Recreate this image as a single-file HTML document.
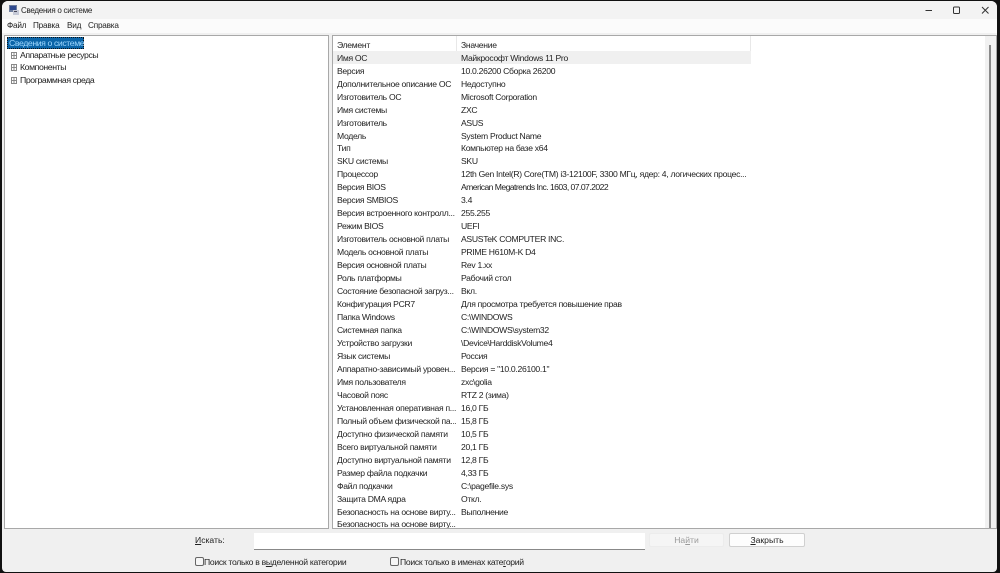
<!DOCTYPE html>
<html><head><meta charset="utf-8"><style>
html,body{margin:0;padding:0;background:#111}
body{width:1000px;height:573px;overflow:hidden;position:relative;font-family:"Liberation Sans","DejaVu Sans",sans-serif;font-size:8.6px;color:#222}
div{position:absolute;box-sizing:border-box}
#win{left:2px;top:1px;width:995px;height:571px;background:#f0f0f0;border-radius:6px 6px 4px 4px;overflow:hidden}
.abs{position:absolute;white-space:nowrap;line-height:12px}
.r{position:absolute;left:0;width:417px;height:13px;line-height:13px;white-space:nowrap;letter-spacing:-.3px}
.r span{position:absolute;top:0}
.r span:first-child{left:4px;width:119px;overflow:hidden}
.r span:last-child{left:128px}
.cb{position:absolute;width:9px;height:9px;box-sizing:border-box;border:1px solid #666;border-radius:2px;background:#f6f6f6}
.m{font-size:8.2px;letter-spacing:-.2px}
.t{font-size:8.7px;letter-spacing:-.4px}
.f{letter-spacing:-.3px}
u{text-decoration-thickness:1px}
</style></head><body>
<div id="win">
<div style="left:0;top:0;width:995px;height:18px;background:#f3f3f3"></div>
<div style="left:0;top:18px;width:995px;height:14px;background:#fbfbfb"></div>
<svg style="position:absolute;left:6px;top:3px" width="12" height="12" viewBox="0 0 12 12"><rect x="1" y="1" width="8" height="7" fill="#6f7f9f"/><rect x="2" y="2" width="6" height="4" fill="#2f4a8f"/><rect x="5" y="6" width="6" height="5" fill="#c5c9d6"/><rect x="6" y="7" width="3" height="1" fill="#445"/></svg>
<span class="abs" style="left:19px;top:4px;font-size:8px;letter-spacing:-.27px">Сведения о системе</span>
<svg style="position:absolute;left:920px;top:0" width="70" height="18" viewBox="0 0 70 18" fill="none" stroke="#333" stroke-width="1"><path d="M3.500 9.500H10"/><rect x="31.500" y="6" width="6" height="6.500" rx="1"/><path d="M60 6l6.500 6.500M66.500 6L60 12.500"/></svg>
<span class="abs m" style="left:5px;top:19px">Файл</span>
<span class="abs m" style="left:31px;top:19px">Правка</span>
<span class="abs m" style="left:65px;top:19px">Вид</span>
<span class="abs m" style="left:86px;top:19px">Справка</span>

<div style="left:2px;top:34px;width:325px;height:494px;background:#fff;border:1px solid #a8a8a8"></div>
<div style="left:5px;top:36px;width:77px;height:12px;background:#0a64a8;border:1px dotted #111"></div>
<span class="abs t" style="left:7px;top:36px;color:#9fd8ff">Сведения о системе</span>
<svg style="position:absolute;left:8px;top:49px" width="8" height="40" viewBox="0 0 8 40" fill="none" stroke="#888" stroke-width="1"><path d="M1.500 5.500h5M4 3v5M1.500 2.500h5v6h-5zM1.500 17.500h5M4 15v5M1.500 14.500h5v6h-5zM1.500 30.500h5M4 28v5M1.500 27.500h5v6h-5z"/></svg>
<span class="abs t" style="left:18px;top:48px">Аппаратные ресурсы</span>
<span class="abs t" style="left:18px;top:60px">Компоненты</span>
<span class="abs t" style="left:18px;top:73px">Программная среда</span>

<div style="left:330px;top:34px;width:665px;height:494px;background:#fff;border:1px solid #a8a8a8;overflow:hidden">
 <div style="left:0;top:0;width:418px;height:15px;background:#fff;border-right:1px solid #e8e8e8"></div>
 <div style="left:123px;top:0;width:1px;height:15px;background:#e8e8e8"></div>
 <div style="left:0;top:15px;width:418px;height:13px;background:#f0f0f0"></div>
 <div class="r" style="top:3px"><span>Элемент</span><span>Значение</span></div>
 <div class="r" style="top:16px"><span>Имя ОС</span><span>Майкрософт Windows 11 Pro</span></div>
 <div class="r" style="top:29px"><span>Версия</span><span>10.0.26200 Сборка 26200</span></div>
 <div class="r" style="top:42px"><span>Дополнительное описание ОС</span><span>Недоступно</span></div>
 <div class="r" style="top:55px"><span>Изготовитель ОС</span><span>Microsoft Corporation</span></div>
 <div class="r" style="top:68px"><span>Имя системы</span><span>ZXC</span></div>
 <div class="r" style="top:81px"><span>Изготовитель</span><span>ASUS</span></div>
 <div class="r" style="top:94px"><span>Модель</span><span>System Product Name</span></div>
 <div class="r" style="top:106px"><span>Тип</span><span>Компьютер на базе x64</span></div>
 <div class="r" style="top:119px"><span>SKU системы</span><span>SKU</span></div>
 <div class="r" style="top:132px"><span>Процессор</span><span>12th Gen Intel(R) Core(TM) i3-12100F, 3300 МГц, ядер: 4, логических процес...</span></div>
 <div class="r" style="top:145px"><span>Версия BIOS</span><span style="letter-spacing:-.55px">American Megatrends Inc. 1603, 07.07.2022</span></div>
 <div class="r" style="top:158px"><span>Версия SMBIOS</span><span>3.4</span></div>
 <div class="r" style="top:171px"><span>Версия встроенного контролл...</span><span>255.255</span></div>
 <div class="r" style="top:184px"><span>Режим BIOS</span><span>UEFI</span></div>
 <div class="r" style="top:197px"><span>Изготовитель основной платы</span><span>ASUSTeK COMPUTER INC.</span></div>
 <div class="r" style="top:210px"><span>Модель основной платы</span><span>PRIME H610M-K D4</span></div>
 <div class="r" style="top:223px"><span>Версия основной платы</span><span>Rev 1.xx</span></div>
 <div class="r" style="top:236px"><span>Роль платформы</span><span>Рабочий стол</span></div>
 <div class="r" style="top:249px"><span>Состояние безопасной загруз...</span><span>Вкл.</span></div>
 <div class="r" style="top:262px"><span>Конфигурация PCR7</span><span>Для просмотра требуется повышение прав</span></div>
 <div class="r" style="top:275px"><span>Папка Windows</span><span>C:\WINDOWS</span></div>
 <div class="r" style="top:288px"><span>Системная папка</span><span>C:\WINDOWS\system32</span></div>
 <div class="r" style="top:301px"><span>Устройство загрузки</span><span>\Device\HarddiskVolume4</span></div>
 <div class="r" style="top:314px"><span>Язык системы</span><span>Россия</span></div>
 <div class="r" style="top:327px"><span>Аппаратно-зависимый уровен...</span><span>Версия = "10.0.26100.1"</span></div>
 <div class="r" style="top:340px"><span>Имя пользователя</span><span>zxc\golia</span></div>
 <div class="r" style="top:353px"><span>Часовой пояс</span><span>RTZ 2 (зима)</span></div>
 <div class="r" style="top:366px"><span>Установленная оперативная п...</span><span>16,0 ГБ</span></div>
 <div class="r" style="top:379px"><span>Полный объем физической па...</span><span>15,8 ГБ</span></div>
 <div class="r" style="top:392px"><span>Доступно физической памяти</span><span>10,5 ГБ</span></div>
 <div class="r" style="top:405px"><span>Всего виртуальной памяти</span><span>20,1 ГБ</span></div>
 <div class="r" style="top:418px"><span>Доступно виртуальной памяти</span><span>12,8 ГБ</span></div>
 <div class="r" style="top:431px"><span>Размер файла подкачки</span><span>4,33 ГБ</span></div>
 <div class="r" style="top:444px"><span>Файл подкачки</span><span>C:\pagefile.sys</span></div>
 <div class="r" style="top:457px"><span>Защита DMA ядра</span><span>Откл.</span></div>
 <div class="r" style="top:470px"><span>Безопасность на основе вирту...</span><span>Выполнение</span></div>
 <div class="r" style="top:482px"><span>Безопасность на основе вирту...</span><span></span></div>
 <div style="left:652px;top:0;width:11px;height:492px;background:#f1f1f1"></div>
 <div style="left:656px;top:9px;width:2px;height:483px;background:#8a8a8a"></div>
</div>

<span class="abs" style="left:193px;top:533px"><u>И</u>скать:</span>
<div style="left:252px;top:532px;width:391px;height:17px;background:#fff;border-bottom:1px solid #888"></div>
<div style="left:647px;top:532px;width:75px;height:14px;background:#f5f5f5;border:1px solid #ececec;border-radius:2px;text-align:center;line-height:13px;color:#9a9a9a">На<u>й</u>ти</div>
<div style="left:727px;top:532px;width:76px;height:14px;background:#fdfdfd;border:1px solid #d0d0d0;border-radius:2px;text-align:center;line-height:13px"><u>З</u>акрыть</div>
<span class="cb" style="left:193px;top:556px"></span>
<span class="abs f" style="left:202px;top:555px">Поиск только в в<u>ы</u>деленной категории</span>
<span class="cb" style="left:388px;top:556px"></span>
<span class="abs f" style="left:398px;top:555px">Поиск только в именах кате<u>г</u>орий</span>
</div>
</body></html>
